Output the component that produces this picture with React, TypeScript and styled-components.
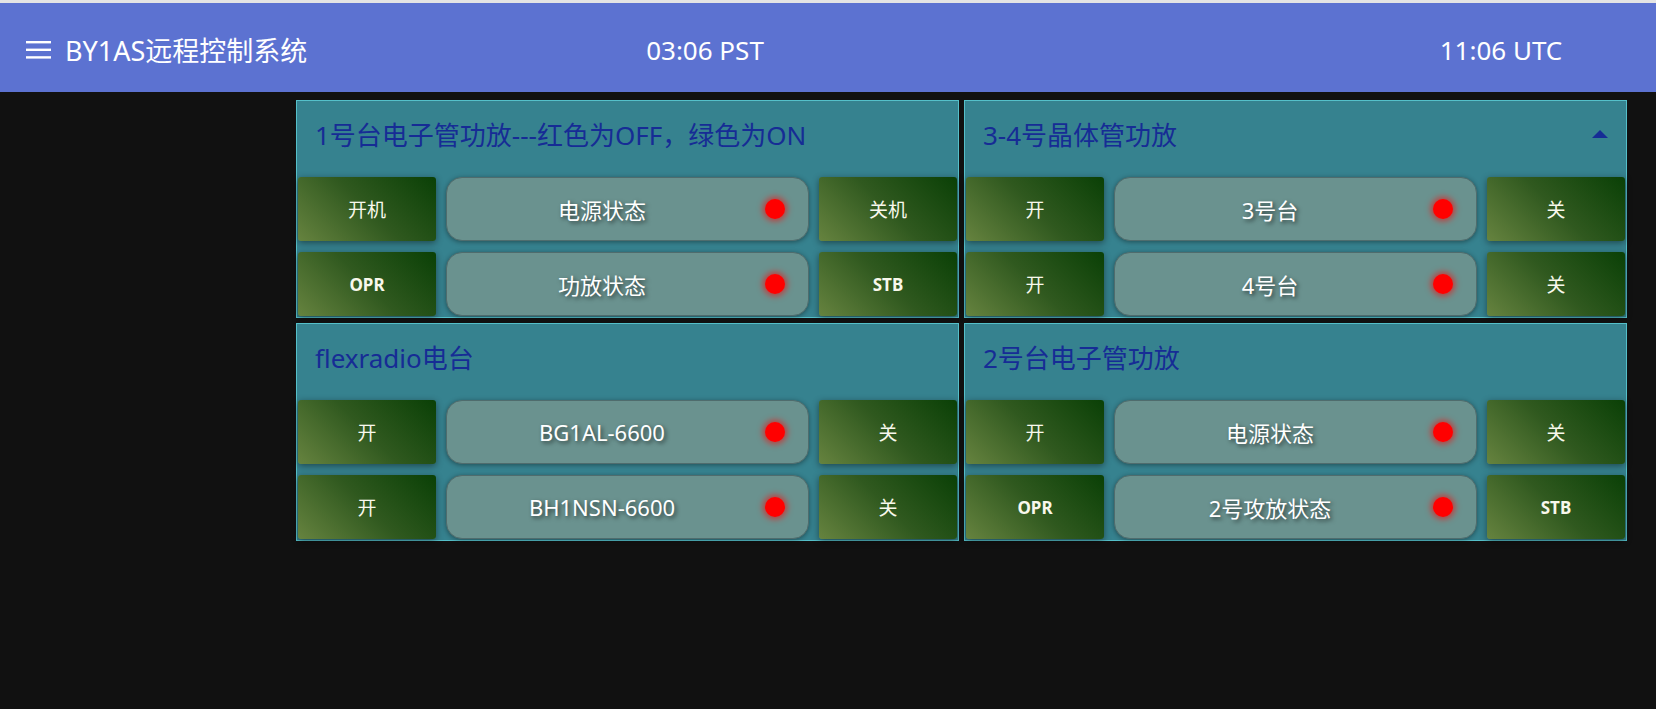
import React from 'react';
import styled, { createGlobalStyle } from 'styled-components';

const GlobalStyle = createGlobalStyle`
  html, body {
    margin: 0;
    padding: 0;
    background: #111111;
    font-family: "Noto Sans", "Noto Sans CJK SC", sans-serif;
  }
`;

const Page = styled.div`
  min-height: 709px;
  background: #111111;
`;

const Header = styled.header`
  box-sizing: border-box;
  border-top: 3px solid #e4e4e4;
  height: 92px;
  padding-top: 4px;
  background: #5c72d1;
  color: #ffffff;
  display: grid;
  grid-template-columns: 590px 230px 1fr 230px 40px;
  align-items: center;
`;

const Brand = styled.div`
  display: flex;
  align-items: center;
  gap: 14px;
  padding-left: 26px;
  font-size: 27px;
`;

const Clock = styled.div<{ $col: number }>`
  grid-column: ${(p) => p.$col};
  text-align: center;
  font-size: 26px;
`;

const Grid = styled.main`
  display: grid;
  grid-template-columns: 1fr 1fr;
  gap: 5px;
  padding: 8px 29px 0 296px;
`;

const Panel = styled.section`
  border: 1px solid #55c0ca;
  background: #36828f;
  display: flex;
  flex-direction: column;
`;

const PanelTitle = styled.div`
  height: 66px;
  margin-bottom: 10px;
  padding: 0 18px;
  display: flex;
  align-items: center;
  justify-content: space-between;
  color: #162c95;
  font-size: 26px;
`;

const Rows = styled.div`
  display: grid;
  grid-template-columns: 138px 1fr 138px;
  grid-auto-rows: 64px;
  column-gap: 10px;
  row-gap: 11px;
  padding: 0 1px 1px;
`;

const Btn = styled.button<{ $bold?: boolean }>`
  border: none;
  border-radius: 3px;
  background: linear-gradient(45deg, #66833f 0%, #30591f 50%, #0a4006 100%);
  box-shadow: 0 2px 7px rgba(0, 0, 0, 0.45);
  color: #f8f8ec;
  font-family: inherit;
  font-size: ${(p) => (p.$bold ? '17px' : '19px')};
  font-weight: ${(p) => (p.$bold ? 700 : 400)};
  cursor: pointer;
`;

const Status = styled.div`
  display: flex;
  align-items: center;
  padding-right: 23px;
  border: 1px solid #4f6c6d;
  border-radius: 16px;
  background: #6a928f;
  box-shadow: 0 1px 5px rgba(0, 0, 0, 0.4);
`;

const StatusText = styled.span`
  flex: 1;
  margin-right: 8px;
  text-align: center;
  color: #ffffff;
  font-size: 22px;
  text-shadow: 2px 2px 4px rgba(0, 0, 0, 0.6);
`;

const Led = styled.span<{ $on: boolean }>`
  width: 20px;
  height: 20px;
  border-radius: 50%;
  background: ${(p) => (p.$on ? '#00e000' : '#ff0000')};
  box-shadow: 0 0 6px 2px ${(p) => (p.$on ? 'rgba(0,224,0,0.6)' : 'rgba(255,0,0,0.6)')};
`;

type Row = { on: string; label: string; off: string; bold?: boolean };
type Block = { title: string; rows: Row[]; arrow?: boolean };

const blocks: Block[] = [
  {
    title: '1号台电子管功放---红色为OFF，绿色为ON',
    rows: [
      { on: '开机', label: '电源状态', off: '关机' },
      { on: 'OPR', label: '功放状态', off: 'STB', bold: true },
    ],
  },
  {
    title: '3-4号晶体管功放',
    arrow: true,
    rows: [
      { on: '开', label: '3号台', off: '关' },
      { on: '开', label: '4号台', off: '关' },
    ],
  },
  {
    title: 'flexradio电台',
    rows: [
      { on: '开', label: 'BG1AL-6600', off: '关' },
      { on: '开', label: 'BH1NSN-6600', off: '关' },
    ],
  },
  {
    title: '2号台电子管功放',
    rows: [
      { on: '开', label: '电源状态', off: '关' },
      { on: 'OPR', label: '2号攻放状态', off: 'STB', bold: true },
    ],
  },
];

const MenuIcon = () => (
  <svg width="25" height="18" viewBox="0 0 25 18">
    <rect x="0" y="0" width="25" height="2.4" fill="#fff" />
    <rect x="0" y="7.6" width="25" height="2.4" fill="#fff" />
    <rect x="0" y="15.2" width="25" height="2.4" fill="#fff" />
  </svg>
);

const ArrowUp = () => (
  <svg width="16" height="8" viewBox="0 0 16 8">
    <path d="M0 8 L8 0 L16 8 Z" fill="#162c95" />
  </svg>
);

const App = () => {
  return (
    <Page>
      <GlobalStyle />
      <Header>
        <Brand>
          <MenuIcon />
          <span>BY1AS远程控制系统</span>
        </Brand>
        <Clock $col={2}>03:06 PST</Clock>
        <Clock $col={4}>11:06 UTC</Clock>
      </Header>
      <Grid>
        {blocks.map((b, i) => (
          <Panel key={i}>
            <PanelTitle>
              <span>{b.title}</span>
              {b.arrow && <ArrowUp />}
            </PanelTitle>
            <Rows>
              {b.rows.map((r, j) => (
                <React.Fragment key={j}>
                  <Btn $bold={r.bold}>{r.on}</Btn>
                  <Status>
                    <StatusText>{r.label}</StatusText>
                    <Led $on={false} />
                  </Status>
                  <Btn $bold={r.bold}>{r.off}</Btn>
                </React.Fragment>
              ))}
            </Rows>
          </Panel>
        ))}
      </Grid>
    </Page>
  );
};

export default App;
